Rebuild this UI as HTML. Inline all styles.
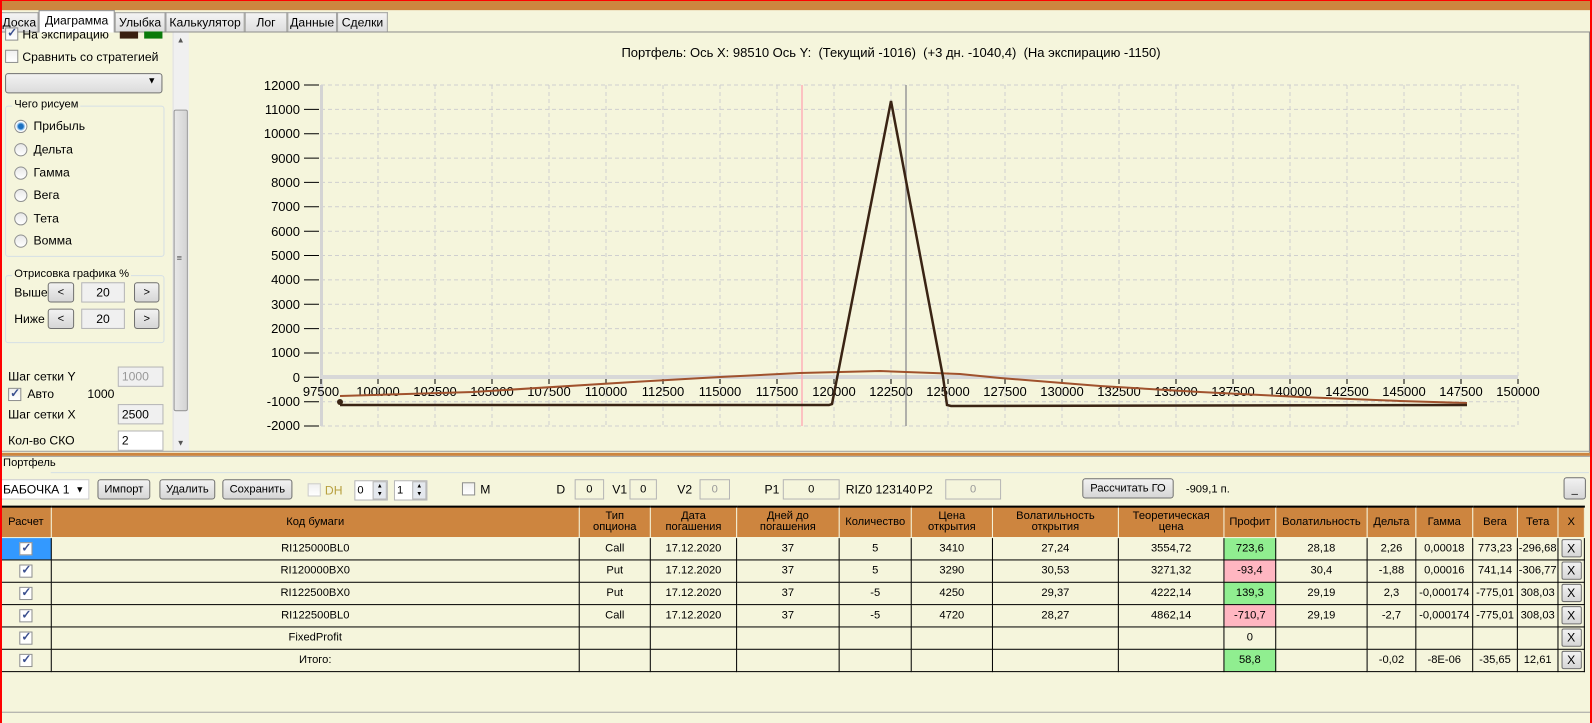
<!DOCTYPE html>
<html><head><meta charset="utf-8"><style>
*{box-sizing:border-box;margin:0;padding:0}
body{width:1592px;height:723px;overflow:hidden;background:#f5f5dc;font-family:"Liberation Sans",sans-serif;font-size:11px;color:#000;position:relative}
#w{position:absolute;left:0;top:0;width:1568px;height:712px;transform:scale(1.0153);transform-origin:0 0}
.a{position:absolute;white-space:nowrap}
.tab{position:absolute;top:12px;height:19px;border:1px solid #a0a0a0;border-bottom:none;background:linear-gradient(#f4f4f4,#dedede);font-size:12px;padding:2px 0 0 0;text-align:center}
.btn{position:absolute;height:20px;border:1px solid #707070;border-radius:3px;background:linear-gradient(#f2f2f2,#d6d6d6);font-size:11px;text-align:center;line-height:18px}
.tb{position:absolute;height:20px;border:1px solid #b5b5b5;background:#f0f0f0;text-align:center;line-height:18px;font-size:11px}
.cb{position:absolute;width:13px;height:13px;border:1px solid #8e8f8f;background:linear-gradient(#f0f0f0,#fff)}
.ck::after{content:"✓";position:absolute;left:1px;top:-3px;font-size:12px;color:#3a4f8f;font-weight:bold}
.rd{position:absolute;width:13px;height:13px;border:1px solid #8e8f8f;border-radius:50%;background:linear-gradient(#e8e8e8,#fff)}
.grp{position:absolute;border:1px solid #d5dfe5;border-radius:3px}
.gl{position:absolute;top:-8px;left:6px;background:#f5f5dc;padding:0 2px;font-size:11px}
table{position:absolute;left:0;top:498px;width:1561px;border-collapse:collapse;font-size:11px}
td,th{border:1px solid #000;text-align:center;height:22px;padding:0}
th{background:#cd853f;font-weight:normal;height:30px;border-color:#f5f5dc;border-top:2px solid #000;line-height:11px}
td{background:#f5f5dc}
.g{background:#90ee90}.p{background:#ffb6c1}
.x{display:inline-block;width:20px;height:18px;border:1px solid #707070;border-radius:2px;background:linear-gradient(#f2f2f2,#d6d6d6);line-height:16px;font-size:12px}
.tc{display:inline-block;width:13px;height:13px;border:1px solid #8e8f8f;background:#fff;position:relative;vertical-align:middle}
.tc::after{content:"✓";position:absolute;left:1px;top:-3px;font-size:12px;color:#3a4f8f;font-weight:bold}
</style></head><body>
<div id="w">
<div class="a" style="left:0;top:0;width:1568px;height:10px;background:#cd853f"></div>
<div class="a" style="left:0;top:31px;width:1566px;height:1px;background:#8c8c8c"></div>
<div class="a" style="left:1565px;top:31px;width:2px;height:415px;background:#8c8c8c"></div>
<div class="tab" style="left:0;width:38px">Доска</div>
<div class="tab" style="left:38px;top:10px;height:22px;width:75px;background:#fff;border-color:#8c8c8c">Диаграмма</div>
<div class="tab" style="left:113px;width:50px">Улыбка</div>
<div class="tab" style="left:163px;width:78px">Калькулятор</div>
<div class="tab" style="left:241px;width:42px">Лог</div>
<div class="tab" style="left:283px;width:49px">Данные</div>
<div class="tab" style="left:332px;width:50px">Сделки</div>
<div class="cb ck" style="left:5px;top:27px"></div><div class="a" style="left:22px;top:27px;font-size:12px">На экспирацию</div>
<div class="a" style="left:118px;top:31px;width:18px;height:7px;background:#3a1f10"></div>
<div class="a" style="left:142px;top:31px;width:18px;height:7px;background:#0a7a0a"></div>
<div class="cb" style="left:5px;top:49px"></div><div class="a" style="left:22px;top:49px;font-size:12px">Сравнить со стратегией</div>
<div class="a" style="left:5px;top:72px;width:155px;height:20px;border:1px solid #707070;border-radius:3px;background:linear-gradient(#f2f2f2,#dcdcdc)"><span class="a" style="right:5px;top:1px;font-size:9px">▼</span></div>
<div class="grp" style="left:5px;top:104px;width:157px;height:149px"><span class="gl">Чего рисуем</span></div>
<div class="rd" style="left:14px;top:118px;background:radial-gradient(#1b6fc0 30%,#8fc3ef 45%,#fff 60%)"></div><div class="a" style="left:33px;top:117px;font-size:12px">Прибыль</div>
<div class="rd" style="left:14px;top:141px"></div><div class="a" style="left:33px;top:140px;font-size:12px">Дельта</div>
<div class="rd" style="left:14px;top:164px"></div><div class="a" style="left:33px;top:163px;font-size:12px">Гамма</div>
<div class="rd" style="left:14px;top:186px"></div><div class="a" style="left:33px;top:185px;font-size:12px">Вега</div>
<div class="rd" style="left:14px;top:209px"></div><div class="a" style="left:33px;top:208px;font-size:12px">Тета</div>
<div class="rd" style="left:14px;top:231px"></div><div class="a" style="left:33px;top:230px;font-size:12px">Вомма</div>
<div class="grp" style="left:5px;top:271px;width:157px;height:67px"><span class="gl">Отрисовка графика %</span></div>
<div class="a" style="left:14px;top:281px;font-size:12px">Выше</div>
<div class="btn" style="left:47px;top:278px;width:26px">&lt;</div><div class="tb" style="left:80px;top:278px;width:43px;font-size:12px">20</div><div class="btn" style="left:132px;top:278px;width:25px">&gt;</div>
<div class="a" style="left:14px;top:307px;font-size:12px">Ниже</div>
<div class="btn" style="left:47px;top:304px;width:26px">&lt;</div><div class="tb" style="left:80px;top:304px;width:43px;font-size:12px">20</div><div class="btn" style="left:132px;top:304px;width:25px">&gt;</div>
<div class="a" style="left:8px;top:364px;font-size:12px">Шаг сетки Y</div><div class="tb" style="left:116px;top:361px;width:45px;color:#999;text-align:left;padding-left:3px;font-size:12px">1000</div>
<div class="cb ck" style="left:8px;top:382px"></div><div class="a" style="left:27px;top:381px;font-size:12px">Авто</div><div class="a" style="left:86px;top:381px;font-size:12px">1000</div>
<div class="a" style="left:8px;top:401px;font-size:12px">Шаг сетки X</div><div class="tb" style="left:116px;top:398px;width:45px;text-align:left;padding-left:3px;font-size:12px">2500</div>
<div class="a" style="left:8px;top:427px;font-size:12px">Кол-во СКО</div><div class="tb" style="left:116px;top:424px;width:45px;background:#fff;text-align:left;padding-left:3px;font-size:12px">2</div>
<div class="a" style="left:170px;top:32px;width:16px;height:412px;background:#f0f0f0;border-left:1px solid #e0e0e0"></div>
<div class="a" style="left:174px;top:35px;font-size:8px;color:#555">▲</div>
<div class="a" style="left:174px;top:432px;font-size:8px;color:#555">▼</div>
<div class="a" style="left:171px;top:108px;width:14px;height:297px;border:1px solid #979797;border-radius:2px;background:linear-gradient(90deg,#e8e8e8,#d4d4d4)"><span class="a" style="left:2px;top:140px;font-size:9px;color:#555">≡</span></div>
<div class="a" style="left:2px;top:444px;width:1564px;height:1px;background:#a0a0a0"></div>
<div class="a" style="left:2px;top:446px;width:1564px;height:3px;background:#cd853f"></div>
<div class="a" style="left:2px;top:449px;width:1564px;height:1px;background:#a0a0a0"></div>
<div class="a" style="left:3px;top:450px;font-size:11px">Портфель</div>
<div class="a" style="left:50px;top:465px;width:1515px;height:1px;background:#d5dfe5"></div>
<div class="a" style="left:0;top:472px;width:88px;height:20px;background:#fff;border:1px solid #ccc;font-size:12px;line-height:18px;padding-left:2px">БАБОЧКА 1<span class="a" style="right:4px;top:0;font-size:9px">▼</span></div>
<div class="btn" style="left:96px;top:472px;width:52px">Импорт</div>
<div class="btn" style="left:157px;top:472px;width:55px">Удалить</div>
<div class="btn" style="left:219px;top:472px;width:69px">Сохранить</div>
<div class="cb" style="left:303px;top:476px;border-color:#ccc"></div><div class="a" style="left:320px;top:476px;color:#b8a040;font-size:12px">DH</div>
<div class="tb" style="left:349px;top:473px;width:33px;text-align:left;padding-left:2px;background:#fff">0</div><div class="a" style="left:367px;top:474px;width:14px;height:18px;background:#e4e8ee;border:1px solid #b5b5b5;font-size:6px;line-height:8px;text-align:center">▲<br>▼</div>
<div class="tb" style="left:388px;top:473px;width:33px;text-align:left;padding-left:2px;background:#fff">1</div><div class="a" style="left:406px;top:474px;width:14px;height:18px;background:#e4e8ee;border:1px solid #b5b5b5;font-size:6px;line-height:8px;text-align:center">▲<br>▼</div>
<div class="cb" style="left:455px;top:475px"></div><div class="a" style="left:473px;top:475px;font-size:12px">M</div>
<div class="a" style="left:548px;top:475px;font-size:12px">D</div><div class="tb" style="left:566px;top:472px;width:29px;background:#f5f5dc">0</div>
<div class="a" style="left:603px;top:475px;font-size:12px">V1</div><div class="tb" style="left:620px;top:472px;width:27px;background:#f5f5dc">0</div>
<div class="a" style="left:667px;top:475px;font-size:12px">V2</div><div class="tb" style="left:689px;top:472px;width:30px;background:#f5f5dc;color:#999">0</div>
<div class="a" style="left:753px;top:475px;font-size:12px">P1</div><div class="tb" style="left:771px;top:472px;width:56px;background:#f5f5dc">0</div>
<div class="a" style="left:833px;top:475px;font-size:12px">RIZ0 123140</div>
<div class="a" style="left:904px;top:475px;font-size:12px">P2</div><div class="tb" style="left:931px;top:472px;width:55px;background:#f5f5dc;color:#999">0</div>
<div class="btn" style="left:1066px;top:471px;width:90px">Рассчитать ГО</div>
<div class="a" style="left:1168px;top:476px;font-size:11px">-909,1 п.</div>
<div class="btn" style="left:1540px;top:470px;width:22px;height:22px;line-height:22px">_</div>
<table>
<tr><th style="width:50px">Расчет</th><th style="width:520px">Код бумаги</th><th style="width:70px">Тип<br>опциона</th><th style="width:85px">Дата<br>погашения</th><th style="width:101px">Дней до<br>погашения</th><th style="width:71px">Количество</th><th style="width:80px">Цена<br>открытия</th><th style="width:124px">Волатильность<br>открытия</th><th style="width:104px">Теоретическая<br>цена</th><th style="width:51px">Профит</th><th style="width:90px">Волатильность</th><th style="width:48px">Дельта</th><th style="width:56px">Гамма</th><th style="width:44px">Вега</th><th style="width:40px">Тета</th><th>X</th></tr>
<tr><td style="background:#3399ff"><span class="tc"></span></td><td>RI125000BL0</td><td>Call</td><td>17.12.2020</td><td>37</td><td>5</td><td>3410</td><td>27,24</td><td>3554,72</td><td class="g">723,6</td><td>28,18</td><td>2,26</td><td>0,00018</td><td>773,23</td><td>-296,68</td><td><span class="x">X</span></td></tr>
<tr><td><span class="tc"></span></td><td>RI120000BX0</td><td>Put</td><td>17.12.2020</td><td>37</td><td>5</td><td>3290</td><td>30,53</td><td>3271,32</td><td class="p">-93,4</td><td>30,4</td><td>-1,88</td><td>0,00016</td><td>741,14</td><td>-306,77</td><td><span class="x">X</span></td></tr>
<tr><td><span class="tc"></span></td><td>RI122500BX0</td><td>Put</td><td>17.12.2020</td><td>37</td><td>-5</td><td>4250</td><td>29,37</td><td>4222,14</td><td class="g">139,3</td><td>29,19</td><td>2,3</td><td>-0,000174</td><td>-775,01</td><td>308,03</td><td><span class="x">X</span></td></tr>
<tr><td><span class="tc"></span></td><td>RI122500BL0</td><td>Call</td><td>17.12.2020</td><td>37</td><td>-5</td><td>4720</td><td>28,27</td><td>4862,14</td><td class="p">-710,7</td><td>29,19</td><td>-2,7</td><td>-0,000174</td><td>-775,01</td><td>308,03</td><td><span class="x">X</span></td></tr>
<tr><td><span class="tc"></span></td><td>FixedProfit</td><td></td><td></td><td></td><td></td><td></td><td></td><td></td><td>0</td><td></td><td></td><td></td><td></td><td></td><td><span class="x">X</span></td></tr>
<tr><td><span class="tc"></span></td><td>Итого:</td><td></td><td></td><td></td><td></td><td></td><td></td><td></td><td class="g">58,8</td><td></td><td>-0,02</td><td>-8E-06</td><td>-35,65</td><td>12,61</td><td><span class="x">X</span></td></tr>
</table>
<div class="a" style="left:0;top:701px;width:1568px;height:1px;background:#a0a0a0"></div>
</div>
<div class="a" style="left:0;top:0;width:2px;height:723px;background:red"></div>
<div class="a" style="right:0;top:0;width:2px;height:723px;background:red"></div>
<div class="a" style="left:0;top:0;width:1592px;height:1px;background:red"></div>
<svg class="a" style="left:0;top:0" width="1592" height="446" font-family="Liberation Sans,sans-serif" font-size="12">
<text x="891" y="57" text-anchor="middle" font-size="13" style="white-space:pre" xml:space="preserve">Портфель: Ось X: 98510 Ось Y:  (Текущий -1016)  (+3 дн. -1040,4)  (На экспирацию -1150)</text>
<g stroke="#cfcfcf" stroke-dasharray="4,3" stroke-width="1">
<path d="M378 85V426M435 85V426M492 85V426M549 85V426M606 85V426M663 85V426M720 85V426M777 85V426M834 85V426M891 85V426M948 85V426M1005 85V426M1062 85V426M1119 85V426M1176 85V426M1233 85V426M1290 85V426M1347 85V426M1404 85V426M1461 85V426M1518 85V426"/>
<path d="M321 85H1518M321 109.4H1518M321 133.7H1518M321 158.1H1518M321 182.4H1518M321 206.8H1518M321 231.2H1518M321 255.5H1518M321 279.9H1518M321 304.2H1518M321 328.6H1518M321 353H1518M321 401.7H1518M321 426H1518"/>
</g>
<rect x="320" y="85" width="3" height="341" fill="#d4d4d4"/>
<rect x="321" y="375" width="1197" height="4" fill="#d8d8d8"/>
<g stroke="#000"><path d="M304 85H319M304 109.4H319M304 133.7H319M304 158.1H319M304 182.4H319M304 206.8H319M304 231.2H319M304 255.5H319M304 279.9H319M304 304.2H319M304 328.6H319M304 353H319M304 377.3H319M304 401.7H319M304 426H319"/>
<path d="M321 379V384M378 379V384M435 379V384M492 379V384M549 379V384M606 379V384M663 379V384M720 379V384M777 379V384M834 379V384M891 379V384M948 379V384M1005 379V384M1062 379V384M1119 379V384M1176 379V384M1233 379V384M1290 379V384M1347 379V384M1404 379V384M1461 379V384M1518 379V384"/></g>
<g text-anchor="end" font-size="13" fill="#000">
<text x="300" y="90">12000</text><text x="300" y="114">11000</text><text x="300" y="138">10000</text><text x="300" y="163">9000</text><text x="300" y="187">8000</text><text x="300" y="211">7000</text><text x="300" y="236">6000</text><text x="300" y="260">5000</text><text x="300" y="284">4000</text><text x="300" y="309">3000</text><text x="300" y="333">2000</text><text x="300" y="357">1000</text><text x="300" y="382">0</text><text x="300" y="406">-1000</text><text x="300" y="430">-2000</text></g>
<g text-anchor="middle" font-size="13" fill="#000">
<text x="321" y="396">97500</text><text x="378" y="396">100000</text><text x="435" y="396">102500</text><text x="492" y="396">105000</text><text x="549" y="396">107500</text><text x="606" y="396">110000</text><text x="663" y="396">112500</text><text x="720" y="396">115000</text><text x="777" y="396">117500</text><text x="834" y="396">120000</text><text x="891" y="396">122500</text><text x="948" y="396">125000</text><text x="1005" y="396">127500</text><text x="1062" y="396">130000</text><text x="1119" y="396">132500</text><text x="1176" y="396">135000</text><text x="1233" y="396">137500</text><text x="1290" y="396">140000</text><text x="1347" y="396">142500</text><text x="1404" y="396">145000</text><text x="1461" y="396">147500</text><text x="1518" y="396">150000</text></g>
<path d="M802 85V426" stroke="#ffb0b8" stroke-width="1.5"/>
<path d="M906 85V426" stroke="#999" stroke-width="1.5"/>
<polyline fill="none" stroke="#a0522d" stroke-width="2" points="340,396 473,392 633,382 720,377 800,373 880,371 960,374 1000,378 1100,386 1200,392 1300,397 1400,401 1467,403"/>
<polyline fill="none" stroke="#3a2414" stroke-width="2.5" points="340,405 829,405 832,404 891,101 943,377 947,405 951,406 1467,405"/>
<circle cx="340" cy="402" r="3" fill="#3a2414"/>
</svg>
</body></html>
